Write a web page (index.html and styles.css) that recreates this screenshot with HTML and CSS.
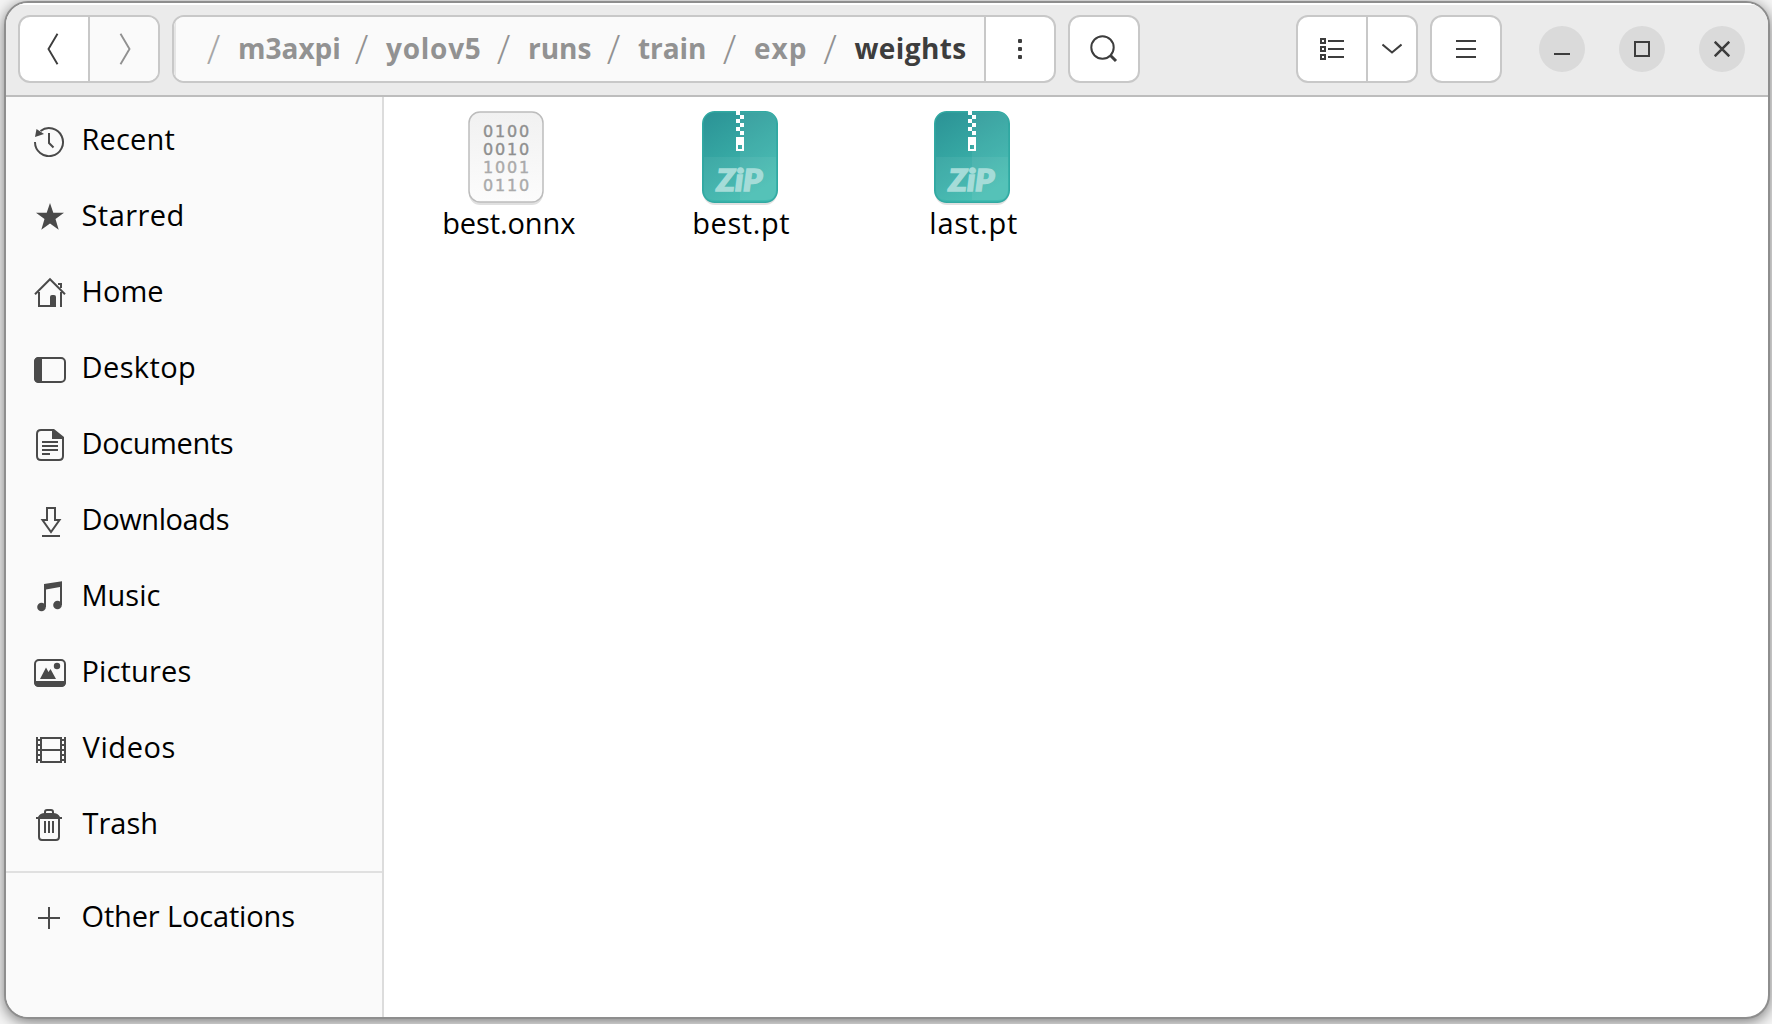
FILE: index.html
```html
<!DOCTYPE html>
<html lang="en">
<head>
<meta charset="utf-8">
<title>weights</title>
<link rel="stylesheet" href="styles.css">
</head>
<body>
<div class="window">
  <header class="header">
    <div class="group">
      <button class="btn back" aria-label="Back"><svg width="12" height="32" viewBox="0 0 12 32"><path d="M10.500 .8 1.500 16l9 15.200"/></svg></button>
      <button class="btn forward" aria-label="Forward"><svg width="12" height="32" viewBox="0 0 12 32"><path d="M1.500 .8l9 15.200-9 15.200"/></svg></button>
    </div>
    <div class="group pathbar">
      <nav class="crumbs">
        <i class="first">/</i><b class="c1">m3axpi</b><i>/</i><b class="c2">yolov5</b><i>/</i><b class="c3">runs</b><i>/</i><b class="c4">train</b><i>/</i><b class="c5">exp</b><i>/</i><b class="c6 current">weights</b>
      </nav>
      <button class="btn more" aria-label="More"><svg width="4" height="20" viewBox="0 0 4 20"><g class="solid"><rect width="4" height="4" rx="1"/><rect y="8" width="4" height="4" rx="1"/><rect y="16" width="4" height="4" rx="1"/></g></svg></button>
    </div>
    <div class="group">
      <button class="btn search" aria-label="Search"><svg width="28" height="28" viewBox="0 0 28 28"><circle cx="12.500" cy="12.500" r="11.200"/><path class="thick" d="m20.500 20.500 5.500 5.500"/></svg></button>
    </div>
    <div class="group view">
      <button class="btn list" aria-label="List view"><svg width="24" height="22" viewBox="0 0 24 22"><path d="M1 1h4v4H1zM1 9h4v4H1zM1 17h4v4H1zM8 3h16M8 11h16M8 19h16"/></svg></button>
      <button class="btn drop" aria-label="View options"><svg width="20" height="12" viewBox="0 0 20 12"><path d="m.5 1.500 9.500 8 9.500-8"/></svg></button>
    </div>
    <div class="group">
      <button class="btn menu" aria-label="Menu"><svg width="20" height="18" viewBox="0 0 20 18"><path d="M0 1h20M0 9h20M0 17h20"/></svg></button>
    </div>
    <div class="controls">
      <button class="round" aria-label="Minimize"><svg width="16" height="16" viewBox="0 0 16 16"><path d="M0 13h16"/></svg></button>
      <button class="round" aria-label="Maximize"><svg width="16" height="16" viewBox="0 0 16 16"><path d="M1 1h14v14H1z"/></svg></button>
      <button class="round" aria-label="Close"><svg width="16" height="16" viewBox="0 0 16 16"><path class="cross" d="m.7.7 14.600 14.600M15.300.7.7 15.300"/></svg></button>
    </div>
  </header>
  <div class="body">
    <aside class="sidebar">
      <ul>
        <li><svg viewBox="0 0 32 32"><path d="M6.500 6A14 14 0 1 1 1 17M15 8v10l4.500 4.500"/><path class="solid" d="M1 12 2.500 4l7.500 5z"/></svg><span class="n1">Recent</span></li>
        <li><svg viewBox="0 0 32 32"><path class="solid" d="m16 2 3.300 9.800H30L21.500 18l3.200 10.800L16 22.500l-8.700 6.300L10.500 18 2 11.800h10.700z"/></svg><span class="n2">Starred</span></li>
        <li><svg viewBox="0 0 32 32"><path d="M1 17.300 16 2.200l15 15.100M5 15v14h14M27 15v15M24 7h3v4"/><path class="solid" d="M16 30V20q0-2 2-2h2q2 0 2 2v10z"/></svg><span class="n3">Home</span></li>
        <li><svg viewBox="0 0 32 32"><rect x="1" y="5" width="30" height="24" rx="4"/><path class="solid" d="M8 4v26H5q-5 0-5-5V9q0-5 5-5z"/></svg><span class="n4">Desktop</span></li>
        <li><svg viewBox="0 0 32 32"><path d="M20 1H7Q3 1 3 5v22q0 4 4 4h18q4 0 4-4V9M8 13h16M8 17h16M8 21h16M8 25h8"/><path class="solid" d="M18 0h2l10 8v2H18z"/></svg><span class="n5">Documents</span></li>
        <li><svg viewBox="0 0 32 32"><path d="M13 3h8v12h4.500L17 27 8.500 15H13zM8 31h18"/></svg><span class="n6">Downloads</span></li>
        <li><svg viewBox="0 0 32 32"><g class="solid"><circle cx="7.500" cy="26" r="4.300"/><circle cx="23.500" cy="24" r="4.300"/><path d="M10 3 28 .3V24h-2V6L12 8.500V26h-2z"/></g></svg><span class="n7">Music</span></li>
        <li><svg viewBox="0 0 32 32"><rect x="1" y="3" width="30" height="26" rx="4"/><g class="solid"><path d="M0 24h32v1q0 5-5 5H5q-5 0-5-5zM6 22l6-11.500 2.500 4.500 2-3L22 22z"/><circle cx="23" cy="9" r="3.200"/></g></svg><span class="n8">Pictures</span></li>
        <li><svg viewBox="0 0 32 32"><path d="M3 4v26M7 4v26M27 4v26M31 4v26M7 5h20M7 17h20M7 29h20"/><path d="M3 7h4M3 12h4M3 17h4M3 22h4M3 27h4M27 7h4M27 12h4M27 17h4M27 22h4M27 27h4"/></svg><span class="n9">Videos</span></li>
        <li><svg viewBox="0 0 32 32"><path d="M11 5V3q0-2 2-2h4q2 0 2 2v2M5 10v18q0 3 3 3h14q3 0 3-3V10M11 12v12M15 12v12M19 12v12"/><path class="solid" d="M2 10V8h2q2-4 7-4h8q5 0 7 4h2v2z"/></svg><span class="n10">Trash</span></li>
      </ul>
      <ul class="other">
        <li><svg viewBox="0 0 32 32"><path d="M4 16h22M15 5v22"/></svg><span class="n11">Other Locations</span></li>
      </ul>
    </aside>
    <main class="files">
      <figure class="onnx">
        <svg class="binary" width="76" height="94" viewBox="0 0 76 94">
          <defs><linearGradient id="paper" x2="0" y2="1"><stop stop-color="#f1f1f1"/><stop offset="1" stop-color="#fcfcfc"/></linearGradient></defs>
          <rect class="shade" x="1" y="3" width="74" height="91" rx="11"/>
          <rect x="1" y="1" width="74" height="90" rx="11" fill="url(#paper)" stroke="#bcbcbc" stroke-width="1.500"/>
          <g class="bits"><text x="15 27 39 51" y="26">0100</text><text x="15 27 39 51" y="44">0010</text><text class="pale" x="15 27 39 51" y="62">1001</text><text class="pale" x="15 27 39 51" y="80">0110</text></g>
        </svg>
        <figcaption class="f1">best.onnx</figcaption>
      </figure>
      <figure>
        <svg class="zip" width="76" height="94" viewBox="0 0 76 94">
          <defs><linearGradient id="teal" x2=".5" y2="1"><stop stop-color="#2b9295"/><stop offset="1" stop-color="#40bbb0"/></linearGradient></defs>
          <rect class="shade" x="1" y="4" width="74" height="90" rx="12"/>
          <rect x=".75" y=".75" width="74.500" height="90.500" rx="12" fill="url(#teal)" stroke="#31a9a2" stroke-width="1.500"/>
          <path class="gloss" d="M2 46h72v33q0 10-10 10H12Q2 89 2 79z"/>
          <path class="gloss" d="M38 1h25q11 0 11 11v67q0 10-10 10H38z"/>
          <path class="teeth" d="M34 0h4v4h-4zM38 4h4v4h-4zM34 8h4v4h-4zM38 12h4v4h-4zM34 16h4v4h-4zM38 20h4v4h-4zM34 26h8v14h-8zM36 34v4h4v-4z"/>
          <text class="zipname" x="14.500" y="79.500" textLength="46" lengthAdjust="spacingAndGlyphs">ZiP</text>
        </svg>
        <figcaption class="f2">best.pt</figcaption>
      </figure>
      <figure>
        <svg class="zip" width="76" height="94" viewBox="0 0 76 94">
          <rect class="shade" x="1" y="4" width="74" height="90" rx="12"/>
          <rect x=".75" y=".75" width="74.500" height="90.500" rx="12" fill="url(#teal)" stroke="#31a9a2" stroke-width="1.500"/>
          <path class="gloss" d="M2 46h72v33q0 10-10 10H12Q2 89 2 79z"/>
          <path class="gloss" d="M38 1h25q11 0 11 11v67q0 10-10 10H38z"/>
          <path class="teeth" d="M34 0h4v4h-4zM38 4h4v4h-4zM34 8h4v4h-4zM38 12h4v4h-4zM34 16h4v4h-4zM38 20h4v4h-4zM34 26h8v14h-8zM36 34v4h4v-4z"/>
          <text class="zipname" x="14.500" y="79.500" textLength="46" lengthAdjust="spacingAndGlyphs">ZiP</text>
        </svg>
        <figcaption class="f3">last.pt</figcaption>
      </figure>
    </main>
  </div>
</div>
</body>
</html>
```
FILE: styles.css
```css
* { box-sizing: border-box; }
body {
  margin: 0; height: 1024px; overflow: hidden; background: #f4f4f4;
  padding: 1px 2px 5px 4px;
  font: 28px/40px "Open Sans", "Noto Sans", sans-serif; color: #000;
}
.window {
  height: 1018px; border: 2px solid #8e8e8e; border-radius: 24px;
  overflow: hidden; display: flex; flex-direction: column; background: #fff;
  box-shadow: 0 3px 14px rgba(0,0,0,.5);
}
.header {
  height: 94px; flex: none; display: flex; align-items: flex-start;
  background: #ebebeb; border-top: 2px solid #fff; border-bottom: 2px solid #bdbdbd;
  padding: 10px 0 0 12px; gap: 12px;
}
.group {
  display: flex; height: 68px; border: 2px solid #c8c8c8; border-radius: 12px;
  background: #fff; overflow: hidden;
}
button { font: inherit; border: 0; padding: 0; margin: 0; background: none; display: flex; align-items: center; justify-content: center; }
svg { display: block; fill: none; stroke: #3d3d3d; stroke-width: 2; flex: none; }
.solid { fill: #3d3d3d; stroke: none; }
.btn { width: 68px; }
.back { width: 70px; border-right: 2px solid #c8c8c8; padding-right: 2px; }
.forward { background: #fafafa; padding-left: 1px; }
.back svg, .forward svg { stroke-width: 1.9; }
.forward svg { stroke: #919191; }
.pathbar { width: 884px; }
.crumbs {
  width: 812px; background: #fafafa; display: flex; align-items: center;
  box-shadow: inset 3px 0 0 -1px #e5e5e5; padding: 0 0 0 33px; color: #929292;
}
.crumbs i {
  flex: none; width: 15px; margin: 0 17px 0 -1px;
  font-style: normal; font-weight: 300; font-size: 40px; text-align: center;
}
.crumbs .first { opacity: .8; }
.crumbs b { flex: none; font-weight: 700; white-space: nowrap; padding-bottom: 2px; }
.c1 { width: 117px; }
.c2 { width: 111px; letter-spacing: .75px; }
.c3 { width: 79px; }
.c4 { width: 85px; letter-spacing: -.1px; }
.c5 { width: 69.5px; letter-spacing: 1px; }
.c6 { letter-spacing: .4px; }
.crumbs .current { color: #3d3d3d; }
.more { border-left: 2px solid #c8c8c8; width: 70px; }
.thick { stroke-width: 3; }
.view { margin-left: 144px; }
.view .list { width: 70px; border-right: 2px solid #c8c8c8; }
.view .drop { width: 48px; }
.controls { display: flex; gap: 34px; margin: 11px 0 0 25px; }
.round { width: 46px; height: 46px; border-radius: 50%; background: #dadada; }
.cross { stroke-width: 2.5; }
.body { flex: 1; display: flex; min-height: 0; }
.sidebar { width: 378px; background: #fafafa; border-right: 2px solid #dcdcdc; padding-top: 6px; flex: none; }
ul { list-style: none; margin: 0; padding: 0 0 8px; }
.other { border-top: 2px solid #e0e0e0; padding-top: 7px; }
li { height: 76px; display: flex; align-items: center; padding-left: 28px; gap: 15.5px; white-space: nowrap; }
li span { padding-bottom: 4px; font-size: 29px; }
li svg { width: 32px; height: 32px; stroke: #4a4a4a; }
li .solid { fill: #4a4a4a; stroke: none; }
.n1 { letter-spacing: .15px; }
.n2 { letter-spacing: .45px; }
.n3 { letter-spacing: .05px; }
.n4 { letter-spacing: .4px; }
.n5 { letter-spacing: -.4px; }
.n6 { letter-spacing: -.4px; }
.n7 { letter-spacing: 0; }
.n8 { letter-spacing: .15px; }
.n9 { letter-spacing: .6px; margin-left: 1px; }
.n10 { letter-spacing: 0; margin-left: 1px; }
.n11 { letter-spacing: -.15px; }
.files { display: flex; align-items: flex-start; padding: 14px 0 0 8px; }
figure { margin: 0; width: 232.5px; display: flex; flex-direction: column; align-items: center; }
figure svg { stroke: none; margin-right: 2px; }
.onnx svg { margin-right: 5px; }
figcaption { font-size: 29px; line-height: 36px; white-space: nowrap; padding-left: 1px; }
.f1 { letter-spacing: -.1px; }
.f2 { letter-spacing: .6px; }
.f3 { letter-spacing: .8px; }
.shade { fill: rgba(0,0,0,.12); }
.bits { font: 16px "DejaVu Sans", sans-serif; fill: #8f8f8f; stroke: #8f8f8f; stroke-width: .4; }
.pale { fill: #aaa; stroke: #aaa; }
.gloss { fill: rgba(255,255,255,.06); }
.teeth { fill: #fff; fill-rule: evenodd; }
.zipname { font: italic 900 30px Lato, sans-serif; fill: #a5dcd8; stroke: #a5dcd8; stroke-width: 1.5; }
```
